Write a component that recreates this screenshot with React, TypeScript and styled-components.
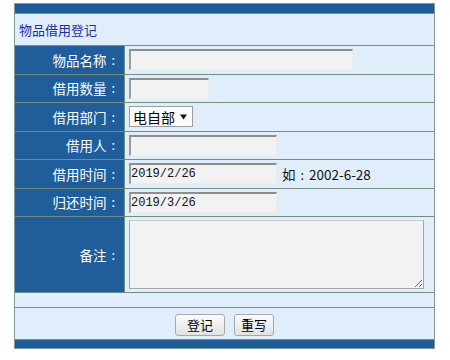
import React from "react";
import styled, { createGlobalStyle } from "styled-components";

const GlobalStyle = createGlobalStyle`
  body {
    margin: 0;
    background: #ffffff;
    font-family: "Noto Sans CJK SC", "Noto Sans", sans-serif;
  }
`;

function App() {
  const fields = [
    { label: "物品名称", field: <TextInput $w={224} /> },
    { label: "借用数量", field: <TextInput $w={80} /> },
    {
      label: "借用部门",
      field: (
        <SelectBox>
          电自部
          <Arrow viewBox="0 0 7 6">
            <path d="M0 0.5 L7 0.5 L3.5 5.5 Z" fill="#111" />
          </Arrow>
        </SelectBox>
      ),
    },
    { label: "借用人", field: <TextInput $w={148} /> },
    {
      label: "借用时间",
      field: (
        <>
          <TextInput $w={148} defaultValue="2019/2/26" />
          <Hint>
            如<Colon>:</Colon>2002-6-28
          </Hint>
        </>
      ),
    },
    {
      label: "归还时间",
      field: <TextInput $w={148} defaultValue="2019/3/26" />,
    },
  ];

  return (
    <>
      <GlobalStyle />
      <Frame>
        <Bar />
        <TitleCell>物品借用登记</TitleCell>
        {fields.map((r, i) => (
          <React.Fragment key={i}>
            <LabelCell>
              {r.label}
              <Colon>:</Colon>
            </LabelCell>
            <ValueCell>{r.field}</ValueCell>
          </React.Fragment>
        ))}
        <LabelCell>
          备注<Colon>:</Colon>
        </LabelCell>
        <ValueCell>
          <Remark />
        </ValueCell>
        <Spacer />
        <ButtonRow>
          <Btn type="button" $pad={11}>登记</Btn>
          <Btn type="button" $pad={6}>重写</Btn>
        </ButtonRow>
        <Bar />
      </Frame>
    </>
  );
}

const Frame = styled.div`
  box-sizing: border-box;
  width: 421px;
  margin: 3px 0 0 14px;
  border: 1px solid #7f9b8c;
  background: #728e80;
  display: grid;
  grid-template-columns: 109px 1fr;
  grid-template-rows: 9px 31px repeat(6, 27.5px) 75px 14px 31px 8px;
  row-gap: 1px;
  column-gap: 1px;
`;

const Bar = styled.div`
  grid-column: 1 / -1;
  background: #1d5c98;
`;

const TitleCell = styled.div`
  grid-column: 1 / -1;
  display: flex;
  align-items: center;
  padding-left: 4px;
  background: #e0eefb;
  color: #1b2fa3;
  font-size: 13px;
`;

const LabelCell = styled.div`
  background: #1f5d9b;
  color: #ffffff;
  font-size: 13.5px;
  display: flex;
  align-items: center;
  justify-content: flex-end;
  padding-right: 4px;
`;

const Colon = styled.span`
  display: inline-block;
  width: 1em;
  text-align: center;
  font-family: "DejaVu Sans", sans-serif;
`;

const ValueCell = styled.div`
  background: #e0eefb;
  display: flex;
  align-items: center;
  gap: 4px;
  padding-left: 4px;
`;

const TextInput = styled.input<{ $w: number }>`
  box-sizing: border-box;
  width: ${({ $w }) => $w}px;
  height: 21px;
  margin: 0;
  padding: 0;
  border-style: solid;
  border-width: 2px 1px 1px 2px;
  border-color: #8e8e8e #ececec #ececec #9a9a9a;
  background: #f2f2f2;
  font-family: "Liberation Mono", "DejaVu Sans Mono", monospace;
  font-size: 12px;
  color: #111;
  outline: none;
`;

const SelectBox = styled.div`
  box-sizing: border-box;
  width: 64px;
  height: 21px;
  display: flex;
  align-items: center;
  gap: 5px;
  padding-left: 3px;
  border: 1px solid #9c9c9c;
  background: #fbfbfb;
  font-size: 14px;
  color: #000;
`;

const Arrow = styled.svg`
  width: 7px;
  height: 6px;
`;

const Hint = styled.span`
  font-size: 13.5px;
  color: #111;
  margin-left: 1px;
`;

const Remark = styled.textarea`
  box-sizing: border-box;
  width: 295px;
  height: 69px;
  margin: 0;
  border: 1px solid #a6a6a6;
  border-top-color: #c8c8c8;
  background: #f2f2f2;
  outline: none;
  resize: both;
`;

const Spacer = styled.div`
  grid-column: 1 / -1;
  background: #e0eefb;
`;

const ButtonRow = styled.div`
  grid-column: 1 / -1;
  display: flex;
  align-items: center;
  justify-content: center;
  gap: 9px;
  background: #e0eefb;
`;

const Btn = styled.button<{ $pad: number }>`
  box-sizing: border-box;
  height: 22px;
  padding: 0 ${({ $pad }) => $pad}px;
  margin-top: 2px;
  border: 1px solid #a8a8a8;
  border-radius: 3px;
  background: linear-gradient(#fbfbfb, #e2e2e2);
  font-family: "Noto Sans CJK SC", sans-serif;
  font-size: 13px;
  color: #000;
  cursor: pointer;
`;

export default App;
